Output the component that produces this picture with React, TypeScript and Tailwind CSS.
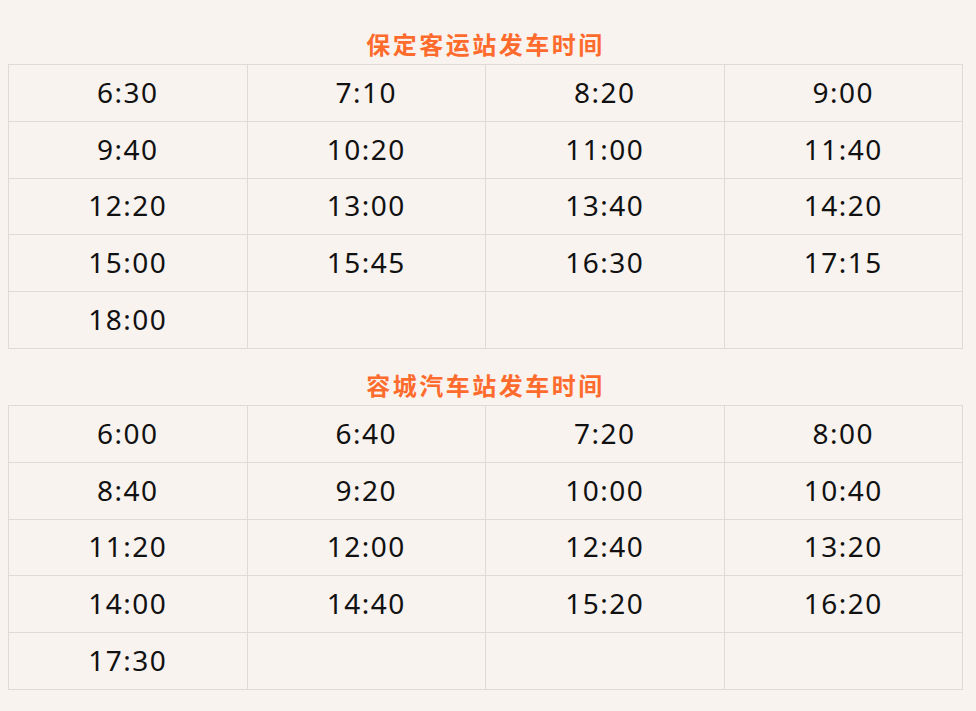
import React from 'react';

const sections = [
  {
    title: '保定客运站发车时间',
    times: ['6:30', '7:10', '8:20', '9:00', '9:40', '10:20', '11:00', '11:40', '12:20', '13:00', '13:40', '14:20', '15:00', '15:45', '16:30', '17:15', '18:00'],
  },
  {
    title: '容城汽车站发车时间',
    times: ['6:00', '6:40', '7:20', '8:00', '8:40', '9:20', '10:00', '10:40', '11:20', '12:00', '12:40', '13:20', '14:00', '14:40', '15:20', '16:20', '17:30'],
  },
];

const Timetable = ({ title, times }: { title: string; times: string[] }) => {
  // pad to full rows of 4
  const cells = [...times];
  while (cells.length % 4 !== 0) cells.push('');

  return (
    <div>
      <h2 className="h-[38px] flex items-center justify-center text-[24px] font-bold tracking-[2.5px] text-[#ff6b2d] leading-none">
        {title}
      </h2>
      <div className="grid grid-cols-4 border-t border-l border-[#dedad6]">
        {cells.map((t, i) => (
          <div
            key={i}
            className="h-[56.8px] flex items-center justify-center pb-[2px] border-r border-b border-[#dedad6] text-[28px] tracking-[1.5px] text-[#111111] font-['Noto_Sans',sans-serif]"
          >
            {t}
          </div>
        ))}
      </div>
    </div>
  );
};

const App = () => {
  return (
    <div className="min-h-[711px] w-full bg-[#f8f3ef] font-['Noto_Sans','Noto_Sans_CJK_SC',sans-serif]">
      <div className="pt-[26px] pl-[8px] pr-[13px] flex flex-col gap-[18px]">
        {sections.map((s) => (
          <Timetable key={s.title} title={s.title} times={s.times} />
        ))}
      </div>
    </div>
  );
};

export default App;
